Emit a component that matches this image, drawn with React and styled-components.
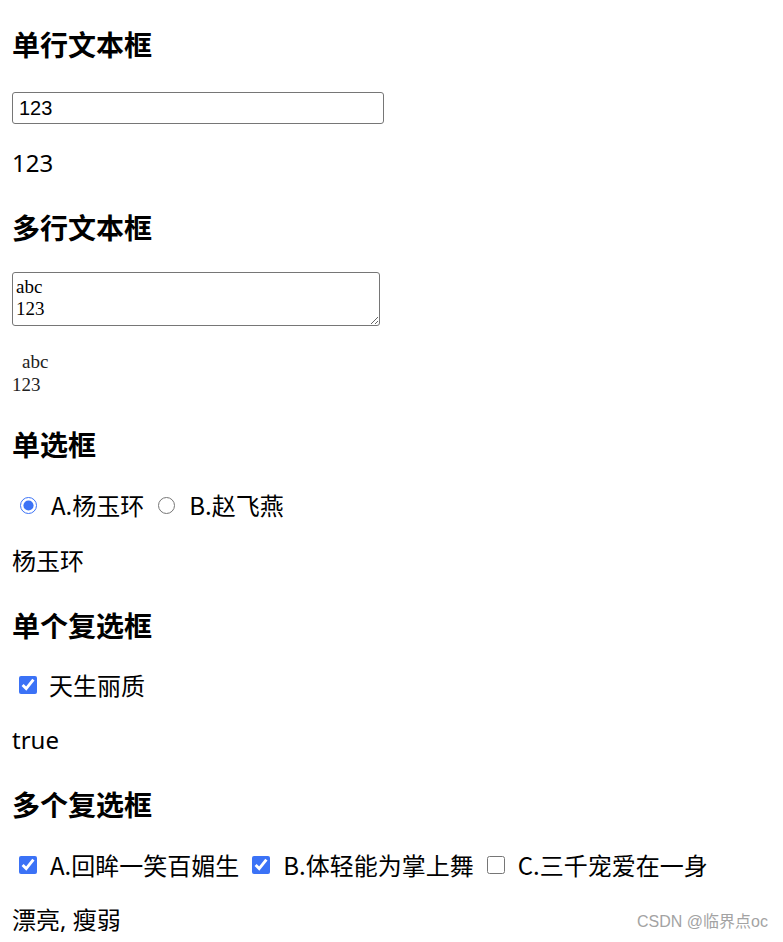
import React, { useState } from "react";
import styled, { createGlobalStyle } from "styled-components";

const GlobalStyle = createGlobalStyle`
  html, body {
    margin: 0;
    padding: 0;
    background: #fff;
  }
  body {
    font-family: "Noto Sans", "Noto Sans CJK SC", sans-serif;
    color: #000;
  }
`;

const Page = styled.div`
  position: relative;
  min-height: 942px;
  padding: 26px 12px 0;
  box-sizing: border-box;
  display: flex;
  flex-direction: column;
  align-items: flex-start;
`;

const Title = styled.h3`
  margin: ${(p) => (p.$first ? "0" : "30px")} 0 ${(p) => p.$gap || 26}px;
  font-family: "Noto Sans CJK SC", sans-serif;
  font-size: 28px;
  line-height: 36px;
  font-weight: 700;
`;

const Output = styled.p`
  margin: ${(p) => p.$top || 24}px 0 0;
  font-size: 24px;
  line-height: 32px;
  font-family: "Noto Sans", "Noto Sans CJK SC", sans-serif;
`;

const TextInput = styled.input`
  width: 372px;
  height: 32px;
  box-sizing: border-box;
  margin: 0;
  padding: 1px 6px;
  border: 1px solid #767676;
  border-radius: 3px;
  font-family: "Liberation Sans", Arial, sans-serif;
  font-size: 20px;
  color: #000;
  outline: none;
`;

const TextArea = styled.textarea`
  width: 368px;
  height: 54px;
  box-sizing: border-box;
  margin: 0;
  padding: 3px 3px;
  border: 1px solid #767676;
  border-radius: 3px;
  font-family: "Liberation Serif", serif;
  font-size: 19px;
  line-height: 22px;
  color: #000;
  outline: none;
  overflow: hidden;
`;

const PreText = styled.div`
  margin: 24px 0 0;
  font-family: "Liberation Serif", serif;
  font-size: 19px;
  line-height: 23px;
  white-space: pre-line;
  text-indent: 10px;
  color: #222;
`;

const ChoiceRow = styled.div`
  display: flex;
  align-items: center;
  height: 32px;
  padding-left: ${(p) => p.$indent || 7}px;
`;

const Choice = styled.label`
  display: flex;
  align-items: center;
  margin-right: ${(p) => p.$space || 14}px;
  font-size: 24px;
  line-height: 32px;
  font-family: "Noto Sans CJK SC", sans-serif;
  cursor: pointer;
`;

const Box = styled.input`
  margin: 0 ${(p) => p.$after || 12}px 0 0;
  width: ${(p) => p.$size || 18}px;
  height: ${(p) => p.$size || 18}px;
  accent-color: #3b72f6;
`;

const Watermark = styled.div`
  position: absolute;
  right: 15px;
  top: 911px;
  font-family: "Liberation Sans", "Noto Sans CJK SC", sans-serif;
  font-size: 16px;
  line-height: 22px;
  color: #a3a3a3;
`;

const beauty = [
  { value: "漂亮", label: "A.回眸一笑百媚生" },
  { value: "瘦弱", label: "B.体轻能为掌上舞" },
  { value: "得宠", label: "C.三千宠爱在一身" },
];

export default function App() {
  const [line, setLine] = useState("123");
  const [multi, setMulti] = useState("abc\n123");
  const [who, setWho] = useState("杨玉环");
  const [born, setBorn] = useState(true);
  const [picked, setPicked] = useState(["漂亮", "瘦弱"]);

  const toggle = (v) =>
    setPicked((list) =>
      list.includes(v) ? list.filter((x) => x !== v) : [...list, v]
    );

  return (
    <Page>
      <GlobalStyle />

      <Title $first $gap={30}>单行文本框</Title>
      <TextInput value={line} onChange={(e) => setLine(e.target.value)} />
      <Output $top={23}>{line}</Output>

      <Title $gap={27}>多行文本框</Title>
      <TextArea value={multi} onChange={(e) => setMulti(e.target.value)} />
      <PreText>{multi}</PreText>

      <Title $gap={27}>单选框</Title>
      <ChoiceRow $indent={8}>
        <Choice>
          <Box
            type="radio"
            name="who"
            $size={17}
            $after={14}
            checked={who === "杨玉环"}
            onChange={() => setWho("杨玉环")}
          />
          A.杨玉环
        </Choice>
        <Choice>
          <Box
            type="radio"
            name="who"
            $size={17}
            $after={14}
            checked={who === "赵飞燕"}
            onChange={() => setWho("赵飞燕")}
          />
          B.赵飞燕
        </Choice>
      </ChoiceRow>
      <Output>{who}</Output>

      <Title>单个复选框</Title>
      <ChoiceRow>
        <Choice>
          <Box
            type="checkbox"
            $after={12}
            checked={born}
            onChange={(e) => setBorn(e.target.checked)}
          />
          天生丽质
        </Choice>
      </ChoiceRow>
      <Output $top={23}>{String(born)}</Output>

      <Title $gap={27}>多个复选框</Title>
      <ChoiceRow>
        {beauty.map((b) => (
          <Choice key={b.value} $space={13}>
            <Box
              type="checkbox"
              $after={13}
              checked={picked.includes(b.value)}
              onChange={() => toggle(b.value)}
            />
            {b.label}
          </Choice>
        ))}
      </ChoiceRow>
      <Output $top={23}>{picked.join(", ")}</Output>

      <Watermark>CSDN @临界点oc</Watermark>
    </Page>
  );
}
